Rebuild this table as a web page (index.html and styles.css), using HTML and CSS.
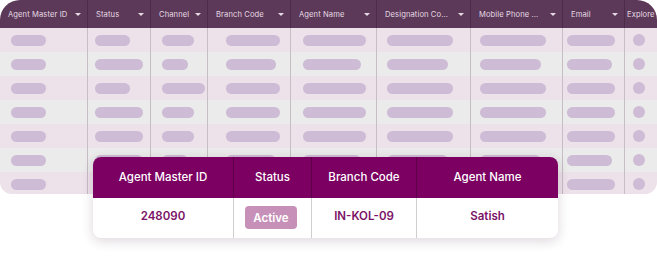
FILE: index.html
```html
<!DOCTYPE html>
<html>
<head>
<meta charset="utf-8">
<link rel="stylesheet" href="styles.css">
</head>
<body>
<div class="stage">
  <div class="grid-table">
    <div class="hcell"><span>Agent Master ID</span><i class="tri"></i></div>
    <div class="hcell"><span>Status</span><i class="tri"></i></div>
    <div class="hcell"><span>Channel</span><i class="tri"></i></div>
    <div class="hcell"><span>Branch Code</span><i class="tri"></i></div>
    <div class="hcell"><span>Agent Name</span><i class="tri"></i></div>
    <div class="hcell"><span>Designation Co...</span><i class="tri"></i></div>
    <div class="hcell"><span>Mobile Phone ...</span><i class="tri"></i></div>
    <div class="hcell"><span>Email</span><i class="tri"></i></div>
    <div class="hcell last"><span>Explore</span></div>
  </div>
  <div class="rows" id="rows"></div>

  <div class="card">
    <div class="card-row head">
      <div class="c c1">Agent Master ID</div>
      <div class="c c2">Status</div>
      <div class="c c3">Branch Code</div>
      <div class="c c4">Agent Name</div>
    </div>
    <div class="card-row body">
      <div class="c c1">248090</div>
      <div class="c c2"><span class="badge">Active</span></div>
      <div class="c c3">IN-KOL-09</div>
      <div class="c c4">Satish</div>
    </div>
  </div>
</div>
<script>
  var widths = [
    [35,35,32,54,63,66,66,48],
    [35,48,26,50,58,61,61,45],
    [35,35,43,54,63,66,66,48],
    [35,48,32,54,63,66,66,48],
    [35,48,32,54,63,66,66,48],
    [35,48,26,50,58,61,61,45],
    [35,35,32,54,63,66,66,48]
  ];
  var rows = document.getElementById('rows');
  widths.forEach(function (r, i) {
    var row = document.createElement('div');
    row.className = 'row ' + (i % 2 ? 'even' : 'odd');
    r.forEach(function (w) {
      var cell = document.createElement('div');
      cell.className = 'cell';
      var p = document.createElement('span');
      p.className = 'pill';
      p.style.width = w + 'px';
      cell.appendChild(p);
      row.appendChild(cell);
    });
    var cell = document.createElement('div');
    cell.className = 'cell dotcell';
    var d = document.createElement('span');
    d.className = 'dot';
    cell.appendChild(d);
    row.appendChild(cell);
    rows.appendChild(row);
  });
</script>
</body>
</html>
```
FILE: styles.css
```css
* { box-sizing: border-box; }
html, body { margin: 0; padding: 0; background: #ffffff; }
body { width: 657px; height: 259px; overflow: hidden; font-family: "Inter", "Noto Sans", sans-serif; }

.stage { position: relative; width: 657px; height: 259px; }

.grid-table, .row {
  display: grid;
  grid-template-columns: 88px 63px 57px 83px 86px 94px 92px 62px 32px;
}

.grid-table {
  height: 28px;
  background: #5c3958;
  border-radius: 20px 20px 0 0;
  overflow: hidden;
}

.hcell {
  display: flex;
  align-items: center;
  justify-content: space-between;
  padding: 0 6px 0 8px;
  border-right: 1px solid #4c2c49;
  color: #e6d9e4;
  font-size: 7.6px;
  white-space: nowrap;
  letter-spacing: 0.1px;
}
.hcell.last { border-right: none; padding: 0 0 0 2px; }

.tri {
  width: 0; height: 0;
  border-left: 3px solid transparent;
  border-right: 3px solid transparent;
  border-top: 3.5px solid #e6d9e4;
}

.rows { border-radius: 0 0 12px 12px; overflow: hidden; height: 166px; }

.row { height: 24px; }
.row.odd { background: #ede1ea; }
.row.even { background: #ebebeb; }

.cell {
  display: flex;
  align-items: center;
  padding-left: 11px;
  border-right: 1px solid #c6bdc5;
}
.row .cell:nth-child(2) { padding-left: 7px; }
.row .cell:nth-child(3) { padding-left: 11px; }
.row .cell:nth-child(4) { padding-left: 18px; }
.row .cell:nth-child(5) { padding-left: 12px; }
.row .cell:nth-child(6) { padding-left: 10px; }
.row .cell:nth-child(7) { padding-left: 9px; }
.row .cell:nth-child(8) { padding-left: 4px; }
.cell.dotcell { border-right: none; padding-left: 8px; }

.pill {
  display: block;
  height: 11px;
  border-radius: 6px;
  background: #cebbd5;
}
.dot {
  display: block;
  width: 12px; height: 12px;
  border-radius: 50%;
  background: #cebbd5;
}

.card {
  position: absolute;
  left: 93px;
  top: 157px;
  width: 465px;
  border-radius: 8px;
  overflow: hidden;
  background: #ffffff;
  box-shadow: 0 3px 12px rgba(60, 30, 55, 0.18);
}
.card-row {
  display: grid;
  grid-template-columns: 141px 78px 105px 141px;
}
.card-row.head { height: 41px; background: #7b0062; color: #ffffff; font-size: 11.5px; font-weight: 500; }
.card-row.body { height: 40px; color: #7b1266; font-size: 11.5px; font-weight: 600; }
.c {
  display: flex;
  align-items: center;
  justify-content: center;
  border-right: 1px solid #cfcfcf;
}
.head .c { border-right-color: #5e0049; padding-bottom: 2px; }
.c.c4 { border-right: none; }
.body .c { padding-bottom: 4px; }

.badge {
  display: inline-flex;
  align-items: center;
  justify-content: center;
  width: 52px;
  height: 23px;
  border-radius: 4px;
  background: #c690b8;
  color: #ffffff;
  font-weight: 600;
  margin-top: 3px;
  margin-right: 3px;
}
```
